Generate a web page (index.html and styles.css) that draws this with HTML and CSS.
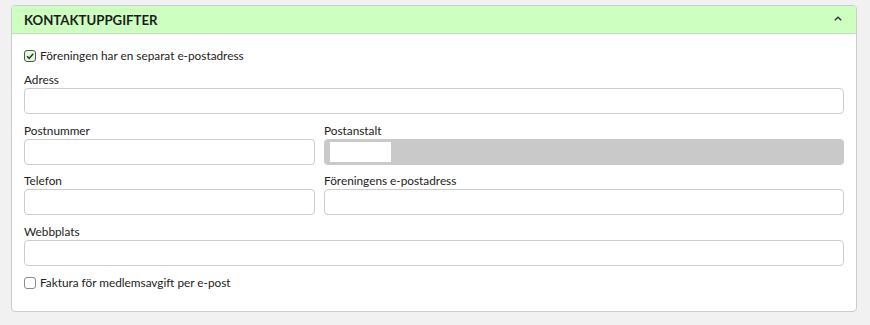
FILE: index.html
```html
<!DOCTYPE html>
<html lang="sv">
<head>
<meta charset="utf-8">
<title>Kontaktuppgifter</title>
<link rel="stylesheet" href="styles.css">
</head>
<body>
<section class="card">
  <header class="card-head">
    <h2 class="card-title">KONTAKTUPPGIFTER</h2>
    <svg class="chevron" width="8" height="5" viewBox="0 0 8 5"><path d="M0.8 4.3 L4 1.2 L7.2 4.3" fill="none" stroke="#333" stroke-width="1.4"/></svg>
  </header>
  <div class="card-body">
    <label class="check">
      <span class="box checked"><svg width="10" height="10" viewBox="0 0 10 10"><path d="M2 5.2 L4.2 7.4 L8.2 2.8" fill="none" stroke="#2a3a2a" stroke-width="1.5"/></svg></span>
      Föreningen har en separat e-postadress
    </label>
    <div class="field">
      <div class="label">Adress</div>
      <div class="input"></div>
    </div>
    <div class="grid">
      <div class="field">
        <div class="label">Postnummer</div>
        <div class="input"></div>
      </div>
      <div class="field">
        <div class="label">Postanstalt</div>
        <div class="input disabled"><span class="inner"></span></div>
      </div>
      <div class="field">
        <div class="label">Telefon</div>
        <div class="input"></div>
      </div>
      <div class="field">
        <div class="label">Föreningens e-postadress</div>
        <div class="input"></div>
      </div>
    </div>
    <div class="field">
      <div class="label">Webbplats</div>
      <div class="input"></div>
    </div>
    <label class="check last">
      <span class="box"></span>
      Faktura för medlemsavgift per e-post
    </label>
  </div>
</section>
</body>
</html>
```
FILE: styles.css
```css
html, body {
  margin: 0;
  padding: 0;
}
body {
  background: #f1f1f1;
  font-family: Lato, "Open Sans", sans-serif;
  font-size: 11.8px;
  color: #222;
}
.card {
  margin: 5px 0 0 11px;
  width: 846px;
  box-sizing: border-box;
  border: 1px solid #cccccc;
  border-radius: 4px;
  background: #fff;
}
.card-head {
  height: 28px;
  box-sizing: border-box;
  background: #ccffc0;
  border-bottom: 1px solid #c8d6c4;
  border-radius: 3px 3px 0 0;
  display: flex;
  align-items: center;
  justify-content: space-between;
  padding: 0 14px 0 12px;
}
.card-title {
  margin: 0;
  font-size: 13.2px;
  font-weight: 700;
  color: #1c1c1c;
  line-height: 16px;
  padding-top: 1px;
}
.chevron {
  display: block;
  margin-top: -2px;
}
.card-body {
  padding: 14px 12px 20px 12px;
}
.check {
  display: flex;
  align-items: center;
  gap: 4px;
  height: 16px;
  line-height: 16px;
}
.box {
  width: 12px;
  height: 12px;
  box-sizing: border-box;
  border: 1px solid #8a8a8a;
  border-radius: 3px;
  background: #fff;
  display: flex;
  align-items: center;
  justify-content: center;
}
.box.checked {
  background: #e4f7dc;
  border-color: #4a5a4a;
}
.field {
  margin-top: 8.67px;
}
.check + .field {
  margin-top: 8px;
}
.label {
  height: 16px;
  line-height: 16px;
}
.input {
  height: 26px;
  box-sizing: border-box;
  border: 1px solid #cccccc;
  border-radius: 4px;
  background: #fff;
}
.input.disabled {
  background: #c9c9c9;
  border-color: #c9c9c9;
  padding: 2px 5px;
}
.inner {
  display: block;
  width: 61px;
  height: 100%;
  background: #fff;
}
.grid {
  display: grid;
  grid-template-columns: 291px 1fr;
  column-gap: 9px;
}
.check.last {
  margin-top: 9px;
}
```
